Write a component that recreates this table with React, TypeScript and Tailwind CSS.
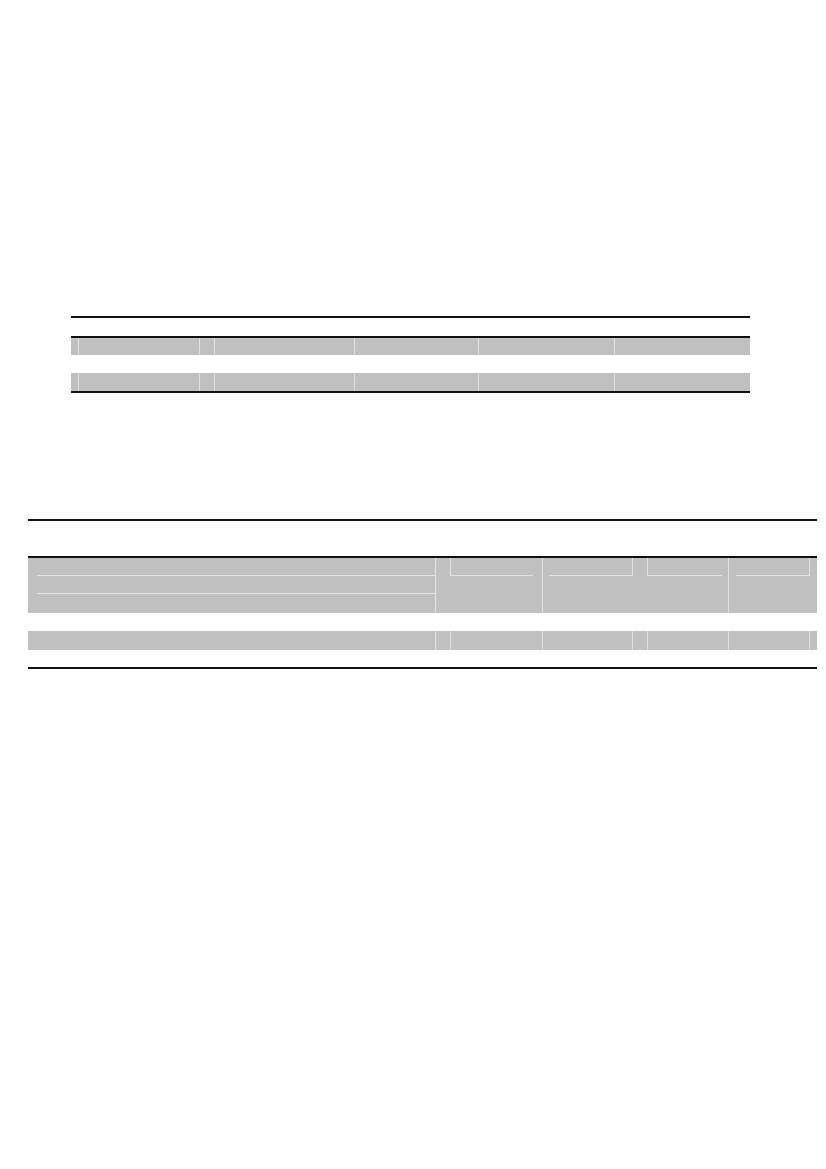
const rule = 'h-[2px] bg-[#111]';
const cellLine = 'border-[#e2e2e2]';

function GrayRow({ widths, height }: { widths: number[]; height: number }) {
  return (
    <div className="flex bg-[#c0c0c0]" style={{ height }}>
      {widths.map((w, i) => (
        <div
          key={i}
          className={i === 0 ? 'h-full' : `h-full border-l ${cellLine}`}
          style={{ width: w }}
        />
      ))}
    </div>
  );
}

function FirstTable() {
  const widths = [7, 121, 15, 140, 124, 136, 136];
  return (
    <div className="ml-[71px] w-[679px]">
      <div className={rule} />
      <div className="h-[18px]" />
      <div className={rule} />
      <GrayRow widths={widths} height={17} />
      <div className="h-[18px]" />
      <GrayRow widths={widths} height={18} />
      <div className={rule} />
    </div>
  );
}

function SecondTable() {
  const widths = [407, 15, 92, 90, 15, 81, 81, 8];
  return (
    <div className="ml-[28px] w-[789px]">
      <div className={rule} />
      <div className="h-[35px]" />
      <div className={rule} />
      <div className="flex h-[55px] bg-[#c0c0c0]">
        <div className="w-[407px] pl-[9px] pt-[17px]">
          <div className={`h-[18px] border-t ${cellLine}`} />
          <div className={`h-[18px] border-t ${cellLine}`} />
        </div>
        <div className={`w-[107px] border-l ${cellLine} pl-[14px]`}>
          <div className={`h-[18px] w-[83px] border-l border-b ${cellLine}`} />
        </div>
        <div className={`flex w-[186px] border-l ${cellLine} pl-[6px]`}>
          <div className={`h-[18px] w-[84px] border-r border-b ${cellLine}`} />
          <div className={`ml-[14px] h-[18px] w-[75px] border-l border-b ${cellLine}`} />
        </div>
        <div className={`w-[89px] border-l ${cellLine} pl-[7px]`}>
          <div className={`h-[18px] w-[74px] border-r border-b ${cellLine}`} />
        </div>
      </div>
      <div className="h-[18px]" />
      <GrayRow widths={widths} height={19} />
      <div className="h-[17px]" />
      <div className={rule} />
    </div>
  );
}

export default function App() {
  return (
    <div className="h-[1169px] w-[826px] bg-white pt-[316px] font-['Liberation_Sans',sans-serif]">
      <FirstTable />
      <div className="h-[126px]" />
      <SecondTable />
    </div>
  );
}
